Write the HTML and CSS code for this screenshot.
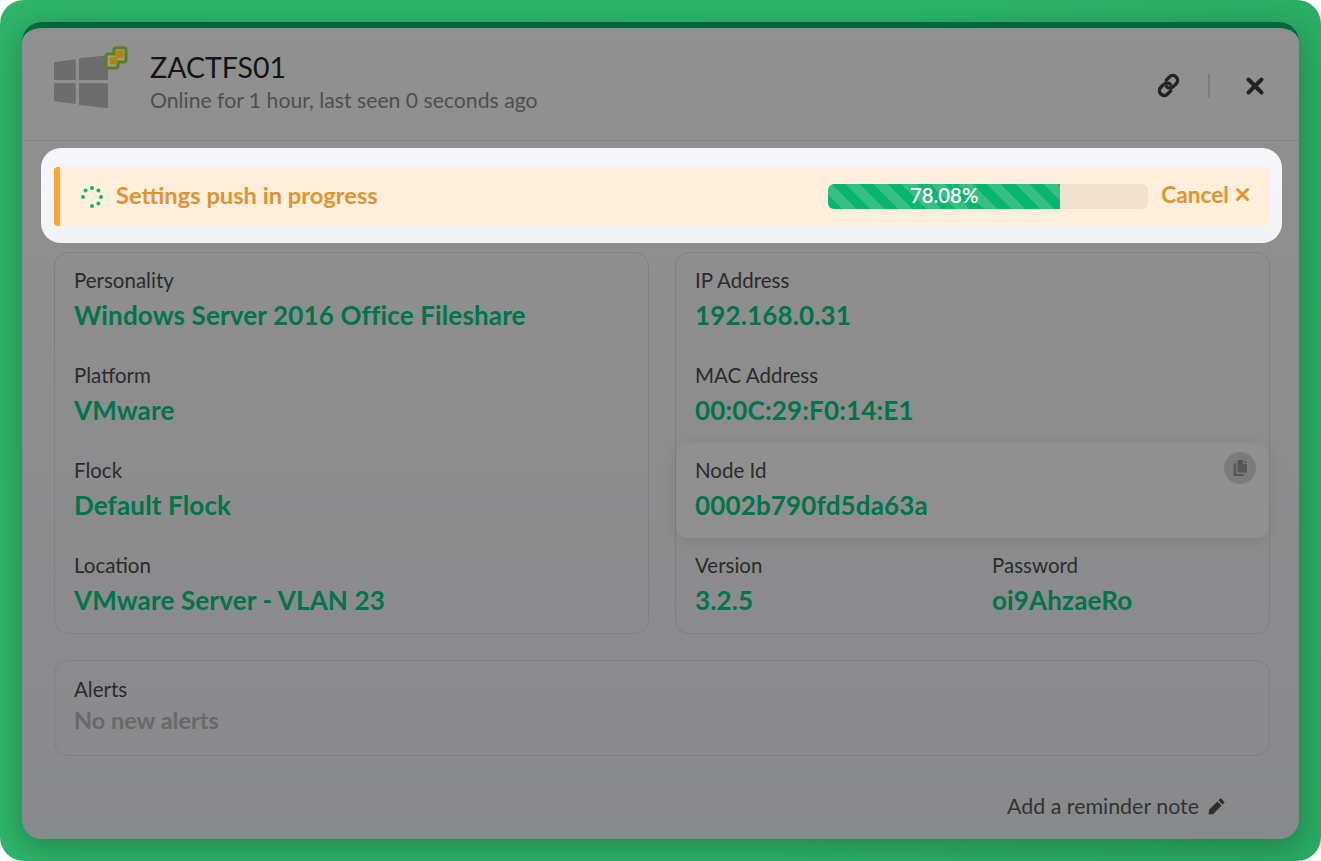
FILE: index.html
```html
<!DOCTYPE html>
<html lang="en">
<head>
<meta charset="utf-8">
<title>ZACTFS01</title>
<link rel="stylesheet" href="styles.css">
</head>
<body>
<div class="frame">
  <div class="modal">
    <header class="head">
      <svg class="logo" width="74" height="64" viewBox="54 46 74 64">
        <g fill="#6d6d6d">
          <path d="M54 62.3 75.7 59.3V80H54z"/>
          <path d="M79 58.3 108 55.3V80H79z"/>
          <path d="M54 83.3H75.7V104L54 101z"/>
          <path d="M79 83.3H108V108.3L79 105z"/>
        </g>
        <path d="M116 47.800H124a2 2 0 0 1 2 2V60a2 2 0 0 1-2 2H118V66a2 2 0 0 1-2 2H108a2 2 0 0 1-2-2V56a2 2 0 0 1 2-2H114V49.800a2 2 0 0 1 2-2z" fill="#9c9c94" stroke="#5a8020" stroke-width="3"/>
        <rect x="116" y="50.500" width="7.500" height="7.500" fill="#b08414"/>
        <rect x="110" y="57" width="7.500" height="7.500" fill="#b08414"/>
      </svg>
      <div class="titles">
        <h1 class="title">ZACTFS01</h1>
        <p class="subtitle">Online for 1 hour, last seen 0 seconds ago</p>
      </div>
      <div class="actions">
        <svg class="link-icon" width="27" height="27" viewBox="0 0 24 24" fill="none" stroke="#232323" stroke-width="3" stroke-linecap="round">
          <path d="M10 7.2 12.8 4.4a4.2 4.2 0 0 1 6 6l-2.600 2.600a4.200 4.200 0 0 1-6 0"/>
          <path d="M14 16.800 11.200 19.600a4.200 4.200 0 0 1-6-6L7.800 11a4.200 4.200 0 0 1 6 0"/>
        </svg>
        <span class="divider"></span>
        <svg class="close-icon" width="20" height="20" viewBox="0 0 20 20" fill="none" stroke="#232323" stroke-width="4" stroke-linecap="round">
          <path d="M3.500 3.500 16.500 16.500M16.500 3.500 3.500 16.500"/>
        </svg>
      </div>
    </header>

    <div class="content">
      <div class="spot">
        <div class="banner">
          <svg class="spinner" width="26" height="26" viewBox="0 0 26 26" fill="#0db777">
            <circle cx="13" cy="4" r="2"/><circle cx="19.400" cy="6.600" r="2"/><circle cx="22" cy="13" r="2"/><circle cx="19.400" cy="19.400" r="2"/><circle cx="13" cy="22" r="2"/><circle cx="4" cy="13" r="2"/><circle cx="6.600" cy="6.600" r="2"/>
          </svg>
          <span class="banner-text">Settings push in progress</span>
          <div class="bar"><div class="bar-fill" style="width:72.5%">78.08%</div></div>
          <span class="cancel">Cancel
            <svg width="15" height="15" viewBox="0 0 15 15" fill="none" stroke="#e09431" stroke-width="3" stroke-linecap="round"><path d="M2.500 2.500 12.500 12.500M12.500 2.500 2.500 12.500"/></svg>
          </span>
        </div>
      </div>

      <div class="columns">
        <section class="card">
          <div class="field"><div class="label">Personality</div><div class="value">Windows Server 2016 Office Fileshare</div></div>
          <div class="field"><div class="label">Platform</div><div class="value">VMware</div></div>
          <div class="field"><div class="label">Flock</div><div class="value">Default Flock</div></div>
          <div class="field"><div class="label">Location</div><div class="value">VMware Server - VLAN 23</div></div>
        </section>
        <section class="card">
          <div class="field"><div class="label">IP Address</div><div class="value">192.168.0.31</div></div>
          <div class="field"><div class="label">MAC Address</div><div class="value">00:0C:29:F0:14:E1</div></div>
          <div class="field field-hover">
            <div class="label">Node Id</div><div class="value">0002b790fd5da63a</div>
            <span class="copy">
              <svg width="16" height="18" viewBox="0 0 16 18" fill="#575757"><path d="M5.500 1H11V5H15V13.500H5.500z"/><path d="M12 1 15 4H12z"/><path d="M1.500 4.500H4.200V15H11.500V17H1.500z"/></svg>
            </span>
          </div>
          <div class="field-pair">
            <div class="field"><div class="label">Version</div><div class="value">3.2.5</div></div>
            <div class="field"><div class="label">Password</div><div class="value">oi9AhzaeRo</div></div>
          </div>
        </section>
      </div>

      <section class="card alerts">
        <div class="label">Alerts</div>
        <div class="alerts-none">No new alerts</div>
      </section>

      <div class="note">
        <span>Add a reminder note</span>
        <svg width="17" height="17" viewBox="0 0 17 17" fill="#2e2e2e"><path d="M12 .8a1 1 0 0 1 1.300 0l2.900 2.900a1 1 0 0 1 0 1.300L14.600 6.600 10.400 2.400zM9.400 3.400 13.600 7.600 5.300 15.900.6 16.400 1.100 11.700z"/></svg>
      </div>
    </div>
  </div>
</div>
</body>
</html>
```

FILE: styles.css
```css
* { box-sizing: border-box; }
html, body { margin: 0; padding: 0; background: #fff; }
body { font-family: Lato, "Noto Sans", sans-serif; width: 1321px; height: 861px; overflow: hidden; }
.frame { width: 1321px; height: 861px; padding: 22px; background: linear-gradient(100deg, #2eb56b 0%, #2db66c 60%, #2bab65 100%); border-radius: 24px; }
.modal { width: 1277px; height: 817px; background: linear-gradient(180deg, #909090 0%, #88898b 100%); border-top: 6px solid #00663c; border-radius: 20px; box-shadow: 0 8px 32px rgba(0,0,0,.28); overflow: hidden; }
.head { height: 113px; display: flex; align-items: flex-start; padding: 18px 32px 0; border-bottom: 1px solid #848484; }
.logo { display: block; flex: none; }
.titles { margin-left: 22px; padding-top: 3px; }
.title { margin: 0; font-size: 28.5px; line-height: 36px; font-weight: 400; color: #141414; }
.subtitle { margin: 0; font-size: 21.2px; line-height: 30px; color: #4f4f4f; }
.actions { margin-left: auto; display: flex; align-items: center; padding: 26px 2px 0 0; }
.divider { width: 2px; height: 24px; background: #7d7d7d; margin: 0 35px 0 26px; }
.content { padding: 7px 29px 0 32px; }
.spot { margin: 0 -12px 0 -13px; height: 95px; padding: 19px 12px 17px 13px; background: linear-gradient(180deg, #f6f7fc, #f2f3f7); border-radius: 20px; }
.banner { height: 59px; display: flex; align-items: center; background: #ffefdc; border-left: 6px solid #ffa62b; border-radius: 4px; padding: 0 20px 0 19px; }
.spinner { flex: none; }
.banner-text { margin-left: 11px; padding-bottom: 4px; font-size: 23.7px; font-weight: 700; color: #e09431; }
.bar { margin-left: auto; width: 320px; height: 25px; background: #f0e2ce; border-radius: 6px; overflow: hidden; }
.bar-fill { height: 100%; color: #fff; font-size: 20.3px; font-weight: 600; line-height: 23px; text-align: center; background: repeating-linear-gradient(45deg, #0ab56f 0 10px, #36bf85 10px 20px); }
.cancel { margin-left: 13px; padding-bottom: 4px; display: flex; align-items: center; gap: 6px; font-size: 22.7px; font-weight: 700; color: #e09431; }
.columns { margin-top: 9px; display: grid; grid-template-columns: 595px 595px; gap: 26px; }
.card { border: 1px solid #7e8082; border-radius: 14px; }
.field { height: 95px; padding: 14px 19px 0; position: relative; }
.label { font-size: 20.5px; line-height: 26px; color: #2b2b2b; }
.value { margin-top: 6px; font-size: 26px; letter-spacing: .15px; line-height: 32px; font-weight: 700; color: #00744a; }
.field-hover { background: #8f8f90; border-radius: 12px; box-shadow: 0 4px 16px rgba(0,0,0,.08); }
.copy { position: absolute; top: 9px; right: 13px; width: 32px; height: 32px; border-radius: 50%; background: #7b7b7b; display: flex; align-items: center; justify-content: center; }
.field-pair { display: grid; grid-template-columns: 297px 1fr; }
.alerts { margin-top: 26px; height: 96px; padding: 15px 19px 0; }
.alerts-none { margin-top: 3px; font-size: 23.5px; line-height: 30px; font-weight: 700; color: #69696b; }
.note { margin-top: 36px; display: flex; align-items: center; justify-content: flex-end; gap: 9px; padding-right: 45px; font-size: 21.4px; line-height: 28px; color: #333; }
```
